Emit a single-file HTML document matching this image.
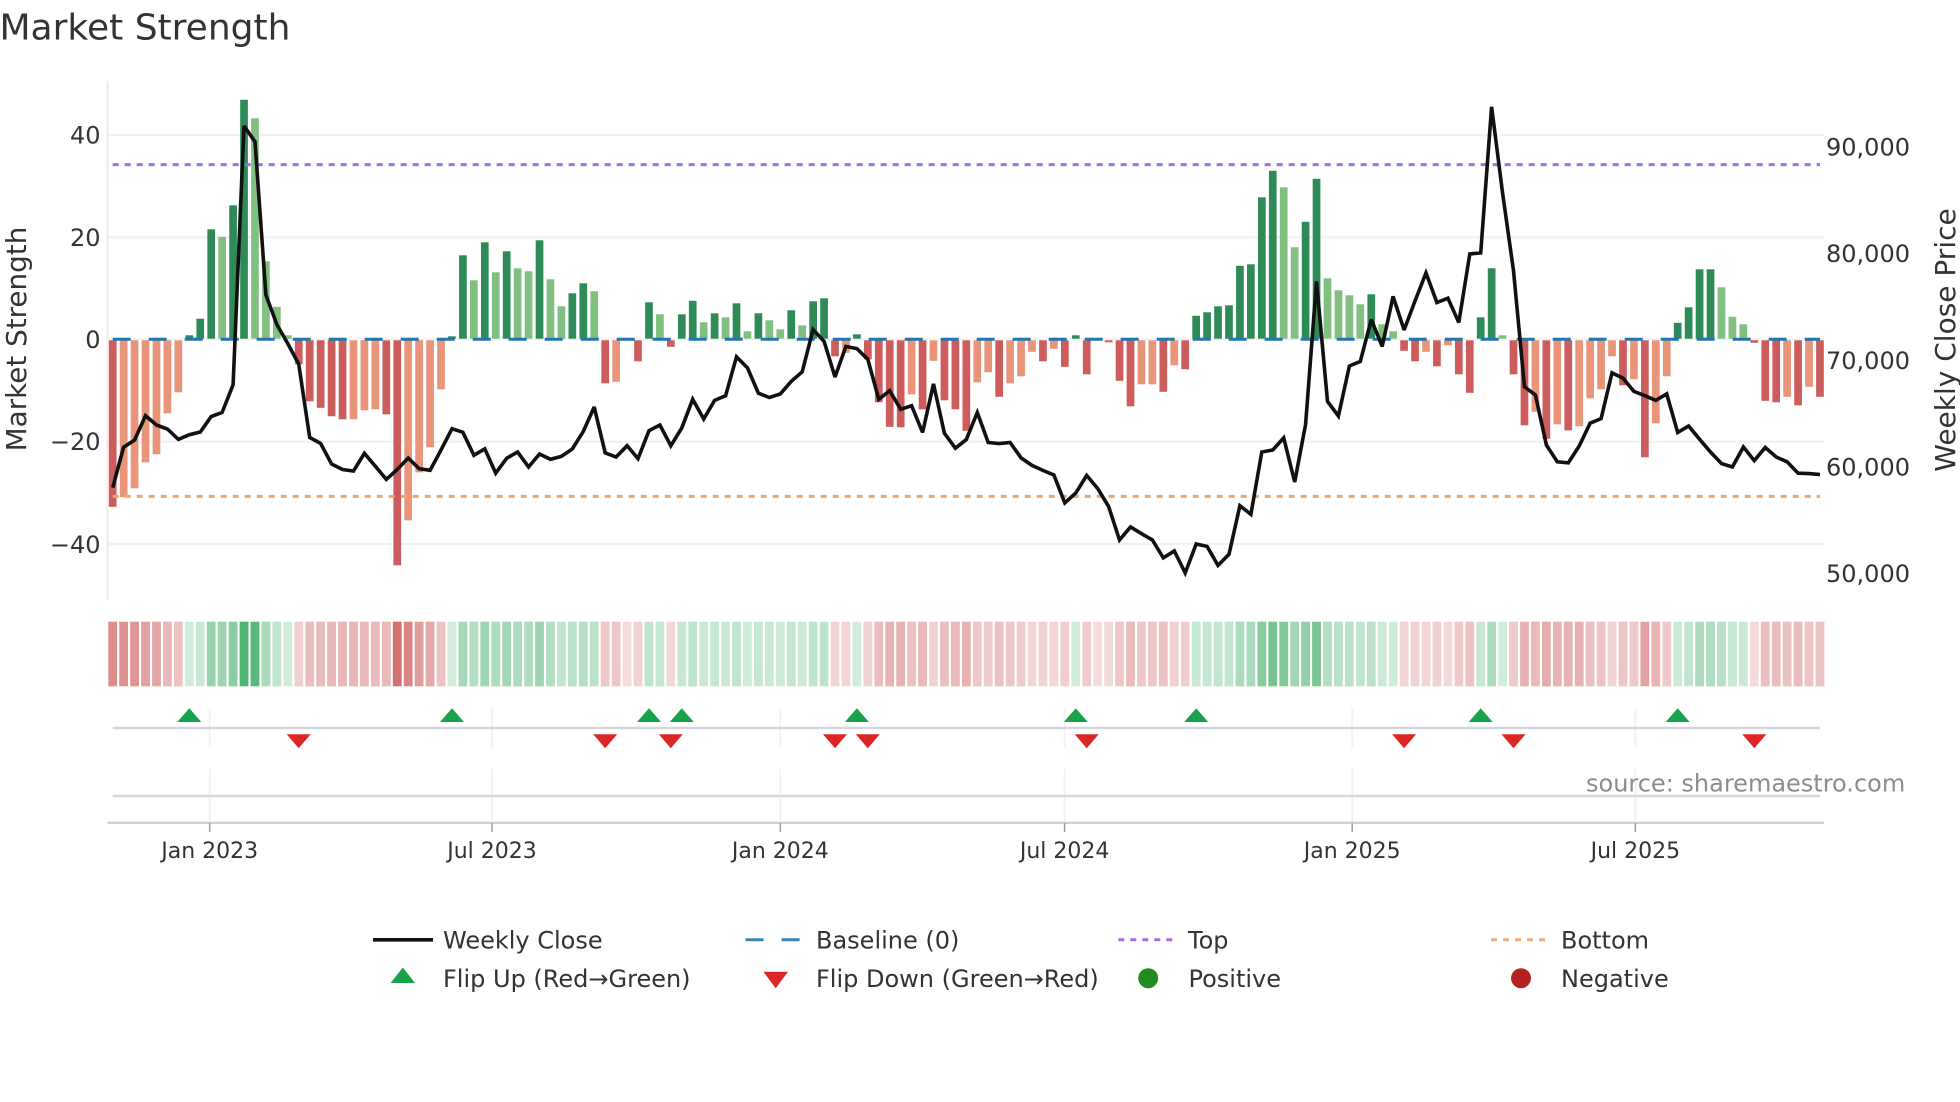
<!DOCTYPE html>
<html>
<head>
<meta charset="utf-8">
<title>Market Strength</title>
<style>
html,body{margin:0;padding:0;background:#fff;width:1960px;height:1102px;overflow:hidden}
svg{display:block;position:absolute;left:0;top:0}
text{font-family:"DejaVu Sans","Liberation Sans",sans-serif;fill:#333}
</style>
</head>
<body>
<svg id="c" width="1960" height="1102" viewBox="0 0 1960 1102" xmlns="http://www.w3.org/2000/svg">
<rect width="1960" height="1102" fill="#fff"/>
<text x="-0.5" y="39.6" font-size="36">Market Strength</text>

<!-- grid -->
<g stroke="#f0f1f3" stroke-width="2.2">
<line x1="108" x2="1824" y1="135" y2="135"/>
<line x1="108" x2="1824" y1="237.3" y2="237.3"/>
<line x1="108" x2="1824" y1="339.3" y2="339.3"/>
<line x1="108" x2="1824" y1="441.7" y2="441.7"/>
<line x1="108" x2="1824" y1="544" y2="544"/>
<line x1="107.5" x2="107.5" y1="81" y2="600" stroke="#eceded"/>
</g>

<g id="bars"></g>
<line x1="112.7" x2="1820" y1="339.3" y2="339.3" stroke="#2176ae" stroke-width="3" stroke-dasharray="18 18"/>
<line x1="112.7" x2="1820" y1="164.6" y2="164.6" stroke="#a66ddc" stroke-width="3" stroke-dasharray="6 6"/>
<line x1="112.7" x2="1820" y1="496.4" y2="496.4" stroke="#f2a566" stroke-width="3" stroke-dasharray="6 6"/>
<polyline id="pl" fill="none" stroke="#111" stroke-width="3.6" stroke-miterlimit="3" points=""/>

<!-- left ticks -->
<g font-size="24" text-anchor="end">
<text x="100.5" y="143.5">40</text>
<text x="100.5" y="246">20</text>
<text x="100.5" y="348">0</text>
<text x="100.5" y="450">−20</text>
<text x="100.5" y="552.8">−40</text>
</g>
<!-- right ticks -->
<g font-size="24">
<text x="1826" y="155.7">90,000</text>
<text x="1826" y="262">80,000</text>
<text x="1826" y="368.8">70,000</text>
<text x="1826" y="475.4">60,000</text>
<text x="1826" y="582">50,000</text>
</g>
<text transform="translate(26,339) rotate(-90)" font-size="27.8" text-anchor="middle">Market Strength</text>
<text transform="translate(1955,340) rotate(-90)" font-size="28" text-anchor="middle">Weekly Close Price</text>

<!-- heat strip -->
<g id="strip"></g>

<!-- flip panel -->
<g stroke="#f0f2f5" stroke-width="1.8">
<path d="M209.7 708V748M209.7 769V822M492 708V748M492 769V822M780.3 708V748M780.3 769V822M1064.6 708V748M1064.6 769V822M1352.2 708V748M1352.2 769V822M1635.4 708V748M1635.4 769V822" fill="none"/>
</g>
<line x1="112.7" x2="1820" y1="728" y2="728" stroke="#d5d7da" stroke-width="2.4"/>
<line x1="112.7" x2="1820" y1="796" y2="796" stroke="#d5d7da" stroke-width="2.4"/>
<line x1="107.5" x2="1824" y1="822.8" y2="822.8" stroke="#d0d1d4" stroke-width="2.4"/>
<path d="M209.7 823V832M492 823V832M780.3 823V832M1064.6 823V832M1352.2 823V832M1635.4 823V832" stroke="#9a9fa5" stroke-width="1.5" fill="none"/>
<g id="flips"></g>

<text x="1586" y="791.7" font-size="24" style="fill:#8c8c8c">source: sharemaestro.com</text>

<g font-size="22" text-anchor="middle">
<text x="209.7" y="858">Jan 2023</text>
<text x="492" y="858">Jul 2023</text>
<text x="780.3" y="858">Jan 2024</text>
<text x="1064.6" y="858">Jul 2024</text>
<text x="1352.2" y="858">Jan 2025</text>
<text x="1635.4" y="858">Jul 2025</text>
</g>

<!-- legend -->
<line x1="373" x2="433" y1="939.8" y2="939.8" stroke="#111" stroke-width="3.6"/>
<line x1="745.6" x2="800.4" y1="939.8" y2="939.8" stroke="#3a84b5" stroke-width="3" stroke-dasharray="18 18"/>
<line x1="1118.3" x2="1173" y1="939.8" y2="939.8" stroke="#a66de0" stroke-width="3" stroke-dasharray="6 6"/>
<line x1="1491" x2="1546" y1="939.8" y2="939.8" stroke="#edb080" stroke-width="3" stroke-dasharray="6 6"/>
<path d="M402.8 967.5L415 983H390.6Z" fill="#16a34a"/>
<path d="M763.4 971.7H788L775.7 988.3Z" fill="#dc2626"/>
<circle cx="1148.2" cy="978.2" r="10" fill="#228b22"/>
<circle cx="1521" cy="978.2" r="10" fill="#b22222"/>
<g font-size="24">
<text x="443" y="948.5">Weekly Close</text>
<text x="816" y="948.5">Baseline (0)</text>
<text x="1188" y="948.5">Top</text>
<text x="1561" y="948.5">Bottom</text>
<text x="443" y="987">Flip Up (Red→Green)</text>
<text x="816" y="987">Flip Down (Green→Red)</text>
<text x="1188.5" y="987">Positive</text>
<text x="1561" y="987">Negative</text>
</g>
</svg>
<script>
(function(){
var H=[-167.5,-158,-149,-123,-115,-74,-53,4,20.6,110,
102.5,134,239.5,221,78,32.5,4,-25,-62,-68.5,
-77,-80,-80,-71,-70,-75,-226,-181,-133,-108,
-50,3,84,59,97,67,88,71,68,99,
60,33,46,56,48,-44,-42.5,0,-22,37,
25,-7.5,25,38.5,17,26,22,36,8,26,
19,10,29,14,38,41,-17,-13.5,5,-20,
-63,-87.5,-88,-55,-70,-21.5,-61,-70,-91.5,-43,
-33,-57.5,-44,-37,-12.5,-22,-9.5,-27.5,4,-35,
0,-3,-41.5,-67,-45,-45,-52.5,-26,-30,23.5,
27,33,34,73.5,75,142,168.5,152,92,117.5,
160.5,61,49,44,35,45,15,8,-11.5,-22,
-12.5,-27,-6,-35,-53.5,22,71,4,-35,-86,
-72.5,-99.5,-85,-91,-87,-59,-50,-17,-46,-40,
-118,-84,-37,16.5,32,70,70,52,22.5,15,
-3.5,-61.5,-63,-57.5,-66,-47.5,-57.5];
var D="dllllllddd"+"lddllllddd"+"ddlllddlll"+"lddldldlld"+"llddldlldd"+"ldddldldld"+"lldldddldd"+"dddldldddl"+"ldllldlddd"+"ldddlldldd"+"dddddddlld"+"dlllldlldd"+"ldlddddldd"+"ldldlllldl"+"dllddddlll"+"dddldld";
var Y=[487.7,447.3,440,415.7,425,429,439.4,434.7,432,416.5,
412.5,384.8,125.9,141.7,295,324.6,343.6,364,437.5,443.4,
464,469.5,471,453.3,466.3,479.4,469.5,458,468.7,470.3,
450,428.7,432.3,455.3,448.8,473.2,458.2,452,467,454,
459.3,456.4,449,431.4,407,452.9,457,445.7,458.6,430.7,
425,445.7,427.9,399.3,419,400.4,395.7,356.8,367.9,393.2,
397.5,393.9,381.4,371.8,329.6,341.4,377,346.4,348.6,359.3,
399.3,390.7,409.3,405.7,432.5,383.9,433.2,448.2,439.6,412.5,
442.5,443.6,442.5,457.9,465.4,470.4,475,502.9,492.9,475.4,
488.6,506.4,540,527,533.6,540,557.9,551,572.9,544,
546.4,565.4,554.3,505.7,514.3,452,450,437.9,482,424.3,
281.4,401.4,416,366,361.4,319.6,346.4,296.4,330,301,
272.9,302.5,298.2,322.5,253.9,252.9,106.8,193.2,270.7,386.8,
395,445,461.8,462.9,446,423.2,418.6,372.9,378.2,391.4,
395.7,400.4,393.9,432.5,426,439.3,452,463.6,467,447,
460.7,447.5,457,461.8,473.2,473.6,474.6];
var NS="http://www.w3.org/2000/svg";
function mk(p,t,a){var e=document.createElementNS(NS,t);for(var k in a)e.setAttribute(k,a[k]);p.appendChild(e);return e;}
var bars=document.getElementById("bars"),strip=document.getElementById("strip"),flips=document.getElementById("flips");
var P=10.944,X0=112.7,pts=[];
for(var i=0;i<157;i++){
  var c=X0+i*P,h=H[i],d=D.charAt(i)=="d";
  if(h>0){
    mk(bars,"rect",{x:(c-3.85).toFixed(2),y:(339.3-h).toFixed(2),width:7.7,height:Math.max(h-.6,.8).toFixed(2),fill:d?"#2e8b57":"#81c081"});
    var a=.19+.0025*h;
    mk(strip,"rect",{x:(c-4.4).toFixed(2),y:621.7,width:8.8,height:64.6,fill:"#1ea04c","fill-opacity":a.toFixed(3)});
  }else{
    if(h<0)mk(bars,"rect",{x:(c-3.85).toFixed(2),y:340.3,width:7.7,height:Math.max(-h-1,.8).toFixed(2),fill:d?"#cd5c5c":"#e8957a"});
    var a2=h==0?.15:.155+.0021*(-h);
    mk(strip,"rect",{x:(c-4.4).toFixed(2),y:621.7,width:8.8,height:64.6,fill:"#b91c1c","fill-opacity":a2.toFixed(3)});
  }
  pts.push(c.toFixed(1)+","+Y[i]);
}
document.getElementById("pl").setAttribute("points",pts.join(" "));
[7,31,49,52,68,88,99,125,143].forEach(function(i){var c=X0+i*P;
  mk(flips,"path",{d:"M"+c.toFixed(1)+" 708.2L"+(c+12).toFixed(1)+" 722H"+(c-12).toFixed(1)+"Z",fill:"#16a34a"});});
[17,45,51,66,69,89,118,128,150].forEach(function(i){var c=X0+i*P;
  mk(flips,"path",{d:"M"+(c-12).toFixed(1)+" 734.3H"+(c+12).toFixed(1)+"L"+c.toFixed(1)+" 748.2Z",fill:"#dc2626"});});
})();
</script>
</body>
</html>
